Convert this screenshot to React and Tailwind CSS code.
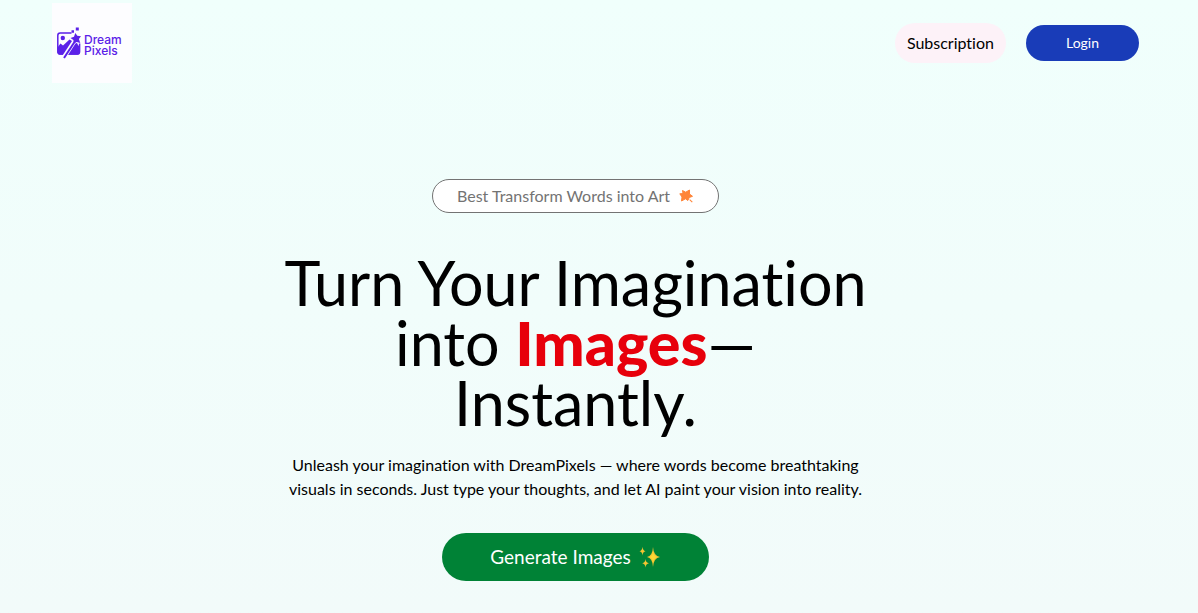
import React from "react";

function Logo() {
  return (
    <a
      href="#home"
      aria-label="Dream Pixels"
      className="flex size-20 items-center gap-[3px] bg-[#fdfdff] pl-1 text-[#5b21e8]"
    >
      <svg viewBox="0 0 25 34" className="h-[34px] w-[25px] shrink-0" aria-hidden="true">
        <path
          d="M15.500 7H4.200Q1.800 7 1.800 9.400V25.600Q1.800 28 4.200 28H21.300Q23.600 28 23.600 25.600V17.500"
          fill="none"
          stroke="currentColor"
          strokeWidth="1.500"
        />
        <circle cx="6.800" cy="12" r="2.200" fill="currentColor" />
        <path
          d="M1.500 21.500L4.500 17.500L7 19.500L13.500 13.500L16 15L18.500 17.500L21 17L22 19L24 21V26.500Q24 28.700 21.800 28.700H3.700Q1.500 28.700 1.500 26.500Z"
          fill="currentColor"
        />
        <path d="M7.500 32L19.500 13.500" stroke="#fdfdff" strokeWidth="4.200" />
        <path d="M8 32L19.500 14.500" stroke="currentColor" strokeWidth="2" />
        <path
          d="M19.300 7L21.300 9.800L25 10.200L22.900 13L24.300 17L20.600 15.900L17.800 17.500L17.400 14L14.500 12L18 10.700Z"
          fill="currentColor"
        />
        <path d="M15.500 4.200H18V6.700H15.500ZM19.800 1.500H22.800V4.500H19.800Z" fill="currentColor" />
      </svg>
      <span className="pt-1 font-['Inter',sans-serif] text-[12px] leading-[11px] font-medium">
        Dream
        <br />
        Pixels
      </span>
    </a>
  );
}

function StarIcon() {
  return (
    <svg viewBox="0 0 16 16" className="size-4" fill="#ff8539" aria-hidden="true">
      <path
        d="M4.500 2.500L7.700 4.200L11.500 2L11.500 6L14.500 8.300L11.300 9.500L9.800 12.500L7.500 10.800L3.500 13L4 9L1.800 5.800L5 5.600Z"
        stroke="#ff8539"
        strokeWidth="1"
        strokeLinejoin="round"
      />
      <path d="M12 11.200L14.700 13.700L13.900 14.500L11.300 12Z" />
    </svg>
  );
}

function SparklesIcon() {
  return (
    <svg viewBox="0 0 22 22" className="size-[22px]" aria-hidden="true">
      <path d="M14 1Q14.500 10 21 11Q14.500 12 14 21Q13.500 12 8 11Q13.500 10 14 1Z" fill="#f4c431" />
      <path d="M14 5.500Q14.500 10 18 11Q14.500 12 14 16.500Q13.500 12 10.500 11Q13.500 10 14 5.500Z" fill="#fdd835" />
      <path d="M3.500 .8Q3.800 4.800 6.500 5.200Q3.800 5.600 3.500 9.500Q3.200 5.600 .5 5.200Q3.200 4.800 3.500 .8Z" fill="#f4c431" />
      <path d="M6.500 13Q6.900 16.800 10 17.200Q6.900 17.600 6.500 21.500Q6.100 17.600 3.200 17.200Q6.100 16.800 6.500 13Z" fill="#f4c431" />
    </svg>
  );
}

export default function App() {
  return (
    <div className="min-h-screen bg-linear-to-b from-[#f0fffc] to-[#f2fbfa] font-['Lato',sans-serif] text-black [font-variant-ligatures:no-common-ligatures]">
      <header className="flex items-center justify-between pt-[3px] pr-[59px] pl-[52px]">
        <Logo />
        <nav className="flex items-center gap-5">
          <a href="#subscription" className="rounded-full bg-[#fdf2f8] px-3 py-2 text-base">
            Subscription
          </a>
          <button
            type="button"
            className="h-9 rounded-full bg-[#193cb8] px-10 text-sm text-white"
          >
            Login
          </button>
        </nav>
      </header>

      <main className="flex flex-col items-center pt-24 pr-[47px] pb-8 text-center">
        <p className="flex items-center gap-2 rounded-full border border-neutral-500 bg-white px-6 py-1 text-base text-neutral-500">
          Best Transform Words into Art
          <StarIcon />
        </p>
        <h1 className="mt-10 max-w-[600px] text-[61px] leading-[60px]">
          Turn Your Imagination into <span className="font-black text-[#e7000b]">Images</span>— Instantly.
        </h1>
        <p className="mt-5 max-w-[580px] text-base">
          Unleash your imagination with DreamPixels — where words become breathtaking visuals in
          seconds. Just type your thoughts, and let AI paint your vision into reality.
        </p>
        <button
          type="button"
          className="mt-8 flex h-12 items-center gap-2 rounded-full bg-[#008236] px-12 text-[19px] text-white"
        >
          Generate Images
          <SparklesIcon />
        </button>
      </main>
    </div>
  );
}
